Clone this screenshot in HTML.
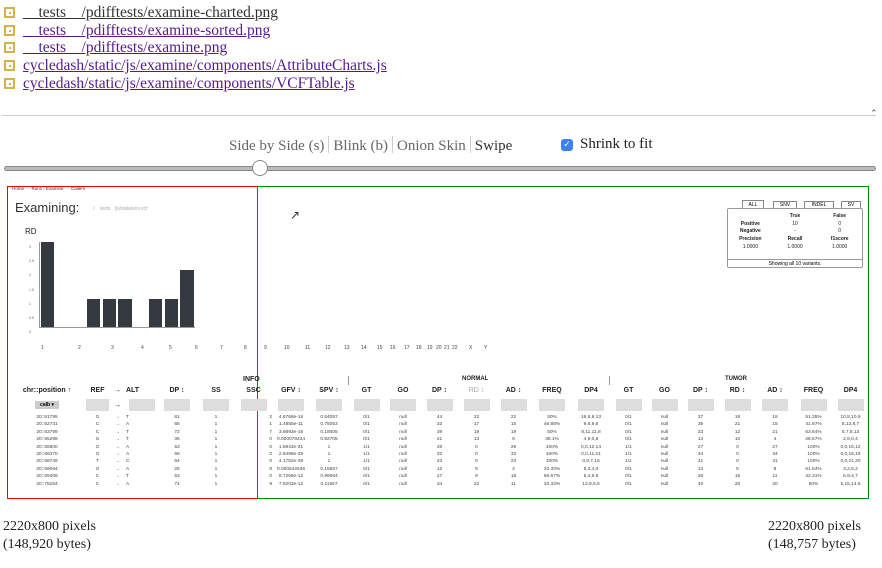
<!DOCTYPE html>
<html><head><meta charset="utf-8">
<style>
*{margin:0;padding:0;box-sizing:border-box}
body{width:882px;height:568px;background:#fff;position:relative;overflow:hidden;font-family:"Liberation Serif",serif}
.a{position:absolute;white-space:nowrap}
.ico{position:absolute;left:4px;width:11px;height:11px;border:2px solid #d4b24a;background:#fff}
.ico:after{content:"";position:absolute;left:3px;top:3px;width:2px;height:2px;background:#d4b24a}
.lnk{position:absolute;left:23px;font-size:15.5px;color:#551a8b;text-decoration:underline;line-height:18px}
.mode{font-size:15px;color:#666}
.sep{display:inline-block;width:1px;height:17px;background:#ccc;vertical-align:-3px;margin:0 4px}
.ss{font-family:"Liberation Sans",sans-serif}
table{position:absolute;left:8px;top:384px;width:860px;border-collapse:collapse;table-layout:fixed;font-family:"Liberation Sans",sans-serif}
td,th{padding:0;text-align:center;overflow:hidden;white-space:nowrap}
th{font-size:7px;font-weight:bold;height:12px;color:#222}
tr.f td{height:14px}
tr.f span{display:inline-block;width:26px;height:12px;background:#ddd;vertical-align:middle}
tr.d td{font-size:4.8px;height:7.4px;line-height:7.4px;color:#444}
.bar{position:absolute;background:#353a40}
.xl{position:absolute;top:345px;font-size:5px;color:#444;font-family:"Liberation Sans",sans-serif}
</style></head><body>

<div class="ico" style="top:7px"></div><div class="lnk" style="top:4px;color:#333">__tests__/pdifftests/examine-charted.png</div>
<div class="ico" style="top:25px"></div><div class="lnk" style="top:22px">__tests__/pdifftests/examine-sorted.png</div>
<div class="ico" style="top:42px"></div><div class="lnk" style="top:39px">__tests__/pdifftests/examine.png</div>
<div class="ico" style="top:60px"></div><div class="lnk" style="top:57px">cycledash/static/js/examine/components/AttributeCharts.js</div>
<div class="ico" style="top:78px"></div><div class="lnk" style="top:75px">cycledash/static/js/examine/components/VCFTable.js</div>

<div class="a" style="left:2px;top:115px;width:874px;height:1px;background:#ccc"></div>
<div class="a" style="left:870px;top:108px;font-size:9px;color:#555">&#8963;</div>

<div class="a mode" style="left:229px;top:136px">Side by Side (s)<span class="sep"></span>Blink (b)<span class="sep"></span>Onion Skin<span class="sep"></span><span style="color:#333">Swipe</span></div>
<div class="a" style="left:561px;top:139px;width:12px;height:12px;border-radius:3px;background:#3b82f6;color:#fff;font-size:9px;line-height:12px;text-align:center;font-family:'DejaVu Sans'">✓</div>
<div class="a" style="left:580px;top:136px;font-size:15px;color:#222">Shrink to fit</div>

<div class="a" style="left:4px;top:166px;width:872px;height:5px;border-radius:3px;background:#bbb;border:1px solid #888"></div>
<div class="a" style="left:252px;top:160px;width:16px;height:16px;border-radius:50%;background:#fff;border:1px solid #888"></div>

<div class="a" style="left:7px;top:186px;width:251px;height:313px;border:1.5px solid #e00"></div>
<div class="a" style="left:257px;top:186px;width:612px;height:313px;border:1.5px solid #080"></div>

<div class="a ss" style="left:12px;top:186px;font-size:4.5px;color:#333">Home &nbsp; &nbsp; &nbsp;Runs › Examine &nbsp; &nbsp; &nbsp;Callers</div>
<div class="a ss" style="left:15px;top:200px;font-size:13px;color:#333">Examining:</div>
<div class="a ss" style="left:93px;top:206px;font-size:5px;color:#aaa">/ &nbsp; &nbsp;tests &nbsp; /js/data/snv.vcf</div>
<div class="a" style="left:290px;top:208px;font-size:12px;color:#333">&#8599;</div>
<div class="a ss" style="left:25px;top:227px;font-size:8px;color:#222">RD</div>

<div class="a" style="left:39px;top:242px;width:1px;height:86px;background:#999"></div>
<div class="a" style="left:39px;top:327px;width:156px;height:1px;background:#999"></div>
<div class="bar" style="left:41px;top:242px;width:13px;height:85px"></div>
<div class="bar" style="left:87px;top:299px;width:13px;height:28px"></div>
<div class="bar" style="left:103px;top:299px;width:13px;height:28px"></div>
<div class="bar" style="left:118px;top:299px;width:14px;height:28px"></div>
<div class="bar" style="left:149px;top:299px;width:13px;height:28px"></div>
<div class="bar" style="left:165px;top:299px;width:13px;height:28px"></div>
<div class="bar" style="left:180px;top:270px;width:14px;height:57px"></div>
<div class="a ss" style="left:29px;top:240px;font-size:3.5px;color:#666;line-height:14.2px">3<br>2.5<br>2<br>1.5<br>1<br>0.5<br>0</div>

<div class="xl" style="left:41px">1</div><div class="xl" style="left:78px">2</div><div class="xl" style="left:111px">3</div>
<div class="xl" style="left:141px">4</div><div class="xl" style="left:169px">5</div><div class="xl" style="left:195px">6</div>
<div class="xl" style="left:220px">7</div><div class="xl" style="left:244px">8</div><div class="xl" style="left:264px">9</div>
<div class="xl" style="left:284px">10</div><div class="xl" style="left:305px">11</div><div class="xl" style="left:325px">12</div>
<div class="xl" style="left:344px">13</div><div class="xl" style="left:361px">14</div><div class="xl" style="left:377px">15</div>
<div class="xl" style="left:390px">16</div><div class="xl" style="left:404px">17</div><div class="xl" style="left:416px">18</div>
<div class="xl" style="left:427px">19</div><div class="xl" style="left:436px">20</div><div class="xl" style="left:444px">21</div>
<div class="xl" style="left:452px">22</div><div class="xl" style="left:469px">X</div><div class="xl" style="left:484px">Y</div>

<div class="a ss" style="left:727px;top:200px;width:136px;font-size:5px">
 <div style="position:absolute;left:15px;top:0;width:22px;height:9px;border:1px solid #888;border-bottom:none;background:#fff;text-align:center;line-height:8px">ALL</div>
 <div style="position:absolute;left:46px;top:1px;width:24px;height:7px;border:1px solid #888;border-bottom:none;text-align:center;line-height:6px">SNV</div>
 <div style="position:absolute;left:77px;top:1px;width:30px;height:7px;border:1px solid #888;border-bottom:none;text-align:center;line-height:6px">INDEL</div>
 <div style="position:absolute;left:114px;top:1px;width:20px;height:7px;border:1px solid #888;border-bottom:none;text-align:center;line-height:6px">SV</div>
 <div style="position:absolute;left:0;top:8px;width:136px;height:60px;border:1px solid #999;border-radius:2px;background:#fff">
  <div style="position:absolute;left:0;top:4px;width:134px;line-height:7.7px;color:#222">
   <div style="display:flex;font-weight:bold"><span style="width:46px"></span><span style="width:46px;text-align:center">True</span><span style="width:46px;text-align:center">False</span></div>
   <div style="display:flex"><b style="width:46px;text-align:center">Positive</b><span style="width:46px;text-align:center">10</span><span style="width:46px;text-align:center">0</span></div>
   <div style="display:flex"><b style="width:46px;text-align:center">Negative</b><span style="width:46px;text-align:center">-</span><span style="width:46px;text-align:center">0</span></div>
   <div style="display:flex;font-weight:bold"><span style="width:46px;text-align:center">Precision</span><span style="width:46px;text-align:center">Recall</span><span style="width:46px;text-align:center">f1score</span></div>
   <div style="display:flex"><span style="width:46px;text-align:center">1.0000</span><span style="width:46px;text-align:center">1.0000</span><span style="width:46px;text-align:center">1.0000</span></div>
  </div>
  <div style="position:absolute;left:0;top:50px;width:134px;border-top:1px solid #999;text-align:center;line-height:8px">Showing all 10 variants.</div>
 </div>
</div>

<div class="a ss" style="left:243px;top:376px;font-size:7px;font-weight:bold;color:#222;line-height:8px">INFO</div>
<div class="a ss" style="left:462px;top:376px;font-size:6px;font-weight:bold;color:#222">NORMAL</div>
<div class="a ss" style="left:725px;top:376px;font-size:6px;font-weight:bold;color:#222">TUMOR</div>
<div class="a" style="left:348px;top:376px;width:1px;height:9px;background:#999"></div>
<div class="a" style="left:609px;top:376px;width:1px;height:9px;background:#999"></div>

<table>
<colgroup><col style="width:78px"><col style="width:23px"><col style="width:17px"><col style="width:31px"><col style="width:40px"><col style="width:38px"><col style="width:37px"><col style="width:38px"><col style="width:38px"><col style="width:37px"><col style="width:36px"><col style="width:37px"><col style="width:37px"><col style="width:37px"><col style="width:40px"><col style="width:38px"><col style="width:37px"><col style="width:35px"><col style="width:37px"><col style="width:37px"><col style="width:38px"><col style="width:39px"><col style="width:35px"></colgroup>
<tr><th>chr::position ↑</th><th>REF</th><th>→</th><th style="text-align:left">ALT</th><th>DP ↕</th><th>SS</th><th>SSC</th><th>GFV ↕</th><th>SPV ↕</th><th>GT</th><th>GO</th><th>DP ↕</th><th style="color:#aaa;font-weight:normal">RD ↕</th><th>AD ↕</th><th>FREQ</th><th>DP4</th><th>GT</th><th>GO</th><th>DP ↕</th><th>RD ↕</th><th>AD ↕</th><th>FREQ</th><th>DP4</th></tr>
<tr class="f"><td><span style="width:24px;height:8px;background:#ccc;font-size:5px;font-weight:bold;line-height:8px">calb ▾</span></td><td><span style="width:25px"></span></td><td style="font-size:7px">→</td><td><span></span></td><td><span></span></td><td><span></span></td><td><span></span></td><td><span></span></td><td><span></span></td><td><span></span></td><td><span></span></td><td><span></span></td><td><span></span></td><td><span></span></td><td><span></span></td><td><span></span></td><td><span></span></td><td><span></span></td><td><span></span></td><td><span></span></td><td><span></span></td><td><span></span></td><td><span></span></td></tr>
<tr class="d"><td>20::61795</td><td>G</td><td>→</td><td style="text-align:left">T</td><td>81</td><td>1</td><td style="text-align:right">2</td><td>4.6768e-16</td><td>0.54057</td><td>0/1</td><td>null</td><td>44</td><td>22</td><td>22</td><td>50%</td><td>16,6,9,13</td><td>0/1</td><td>null</td><td>37</td><td>18</td><td>19</td><td>51.35%</td><td>10,8,10,9</td></tr>
<tr class="d"><td>20::62731</td><td>C</td><td>→</td><td style="text-align:left">A</td><td>68</td><td>1</td><td style="text-align:right">1</td><td>1.4855e-11</td><td>0.75053</td><td>0/1</td><td>null</td><td>32</td><td>17</td><td>15</td><td>46.88%</td><td>9,8,9,6</td><td>0/1</td><td>null</td><td>36</td><td>21</td><td>15</td><td>41.67%</td><td>8,13,8,7</td></tr>
<tr class="d"><td>20::63799</td><td>C</td><td>→</td><td style="text-align:left">T</td><td>72</td><td>1</td><td style="text-align:right">7</td><td>3.6893e-16</td><td>0.18005</td><td>0/1</td><td>null</td><td>39</td><td>19</td><td>19</td><td>50%</td><td>8,11,11,8</td><td>0/1</td><td>null</td><td>33</td><td>12</td><td>21</td><td>63.64%</td><td>5,7,8,13</td></tr>
<tr class="d"><td>20::65288</td><td>G</td><td>→</td><td style="text-align:left">T</td><td>35</td><td>1</td><td style="text-align:right">0</td><td>0.000078434</td><td>0.82705</td><td>0/1</td><td>null</td><td>21</td><td>13</td><td>8</td><td>38.1%</td><td>4,9,0,8</td><td>0/1</td><td>null</td><td>14</td><td>10</td><td>4</td><td>28.57%</td><td>2,8,0,4</td></tr>
<tr class="d"><td>20::65900</td><td>G</td><td>→</td><td style="text-align:left">A</td><td>53</td><td>1</td><td style="text-align:right">0</td><td>1.5943e-31</td><td>1</td><td>1/1</td><td>null</td><td>26</td><td>0</td><td>26</td><td>100%</td><td>0,0,12,14</td><td>1/1</td><td>null</td><td>27</td><td>0</td><td>27</td><td>100%</td><td>0,0,15,12</td></tr>
<tr class="d"><td>20::66370</td><td>G</td><td>→</td><td style="text-align:left">A</td><td>66</td><td>1</td><td style="text-align:right">0</td><td>2.6498e-39</td><td>1</td><td>1/1</td><td>null</td><td>32</td><td>0</td><td>32</td><td>100%</td><td>0,0,11,21</td><td>1/1</td><td>null</td><td>34</td><td>0</td><td>34</td><td>100%</td><td>0,0,15,19</td></tr>
<tr class="d"><td>20::68749</td><td>T</td><td>→</td><td style="text-align:left">C</td><td>64</td><td>1</td><td style="text-align:right">0</td><td>4.1752e-38</td><td>1</td><td>1/1</td><td>null</td><td>23</td><td>0</td><td>23</td><td>100%</td><td>0,0,7,16</td><td>1/1</td><td>null</td><td>41</td><td>0</td><td>41</td><td>100%</td><td>0,0,21,20</td></tr>
<tr class="d"><td>20::69094</td><td>G</td><td>→</td><td style="text-align:left">A</td><td>25</td><td>1</td><td style="text-align:right">8</td><td>0.000042636</td><td>0.15657</td><td>0/1</td><td>null</td><td>12</td><td>8</td><td>4</td><td>33.33%</td><td>5,3,4,0</td><td>0/1</td><td>null</td><td>13</td><td>5</td><td>8</td><td>61.54%</td><td>3,2,6,2</td></tr>
<tr class="d"><td>20::69408</td><td>C</td><td>→</td><td style="text-align:left">T</td><td>53</td><td>1</td><td style="text-align:right">0</td><td>8.7266e-12</td><td>0.98064</td><td>0/1</td><td>null</td><td>27</td><td>9</td><td>18</td><td>66.67%</td><td>5,4,9,9</td><td>0/1</td><td>null</td><td>26</td><td>15</td><td>11</td><td>42.31%</td><td>6,9,4,7</td></tr>
<tr class="d"><td>20::75254</td><td>C</td><td>→</td><td style="text-align:left">A</td><td>74</td><td>1</td><td style="text-align:right">9</td><td>7.9203e-12</td><td>0.11567</td><td>0/1</td><td>null</td><td>34</td><td>22</td><td>11</td><td>33.33%</td><td>13,9,5,6</td><td>0/1</td><td>null</td><td>40</td><td>20</td><td>20</td><td>50%</td><td>5,15,14,6</td></tr>
</table>

<div class="a" style="left:3px;top:518px;font-size:14px;color:#222;line-height:18px">2220x800 pixels<br>(148,920 bytes)</div>
<div class="a" style="left:768px;top:518px;font-size:14px;color:#222;line-height:18px">2220x800 pixels<br>(148,757 bytes)</div>
</body></html>
